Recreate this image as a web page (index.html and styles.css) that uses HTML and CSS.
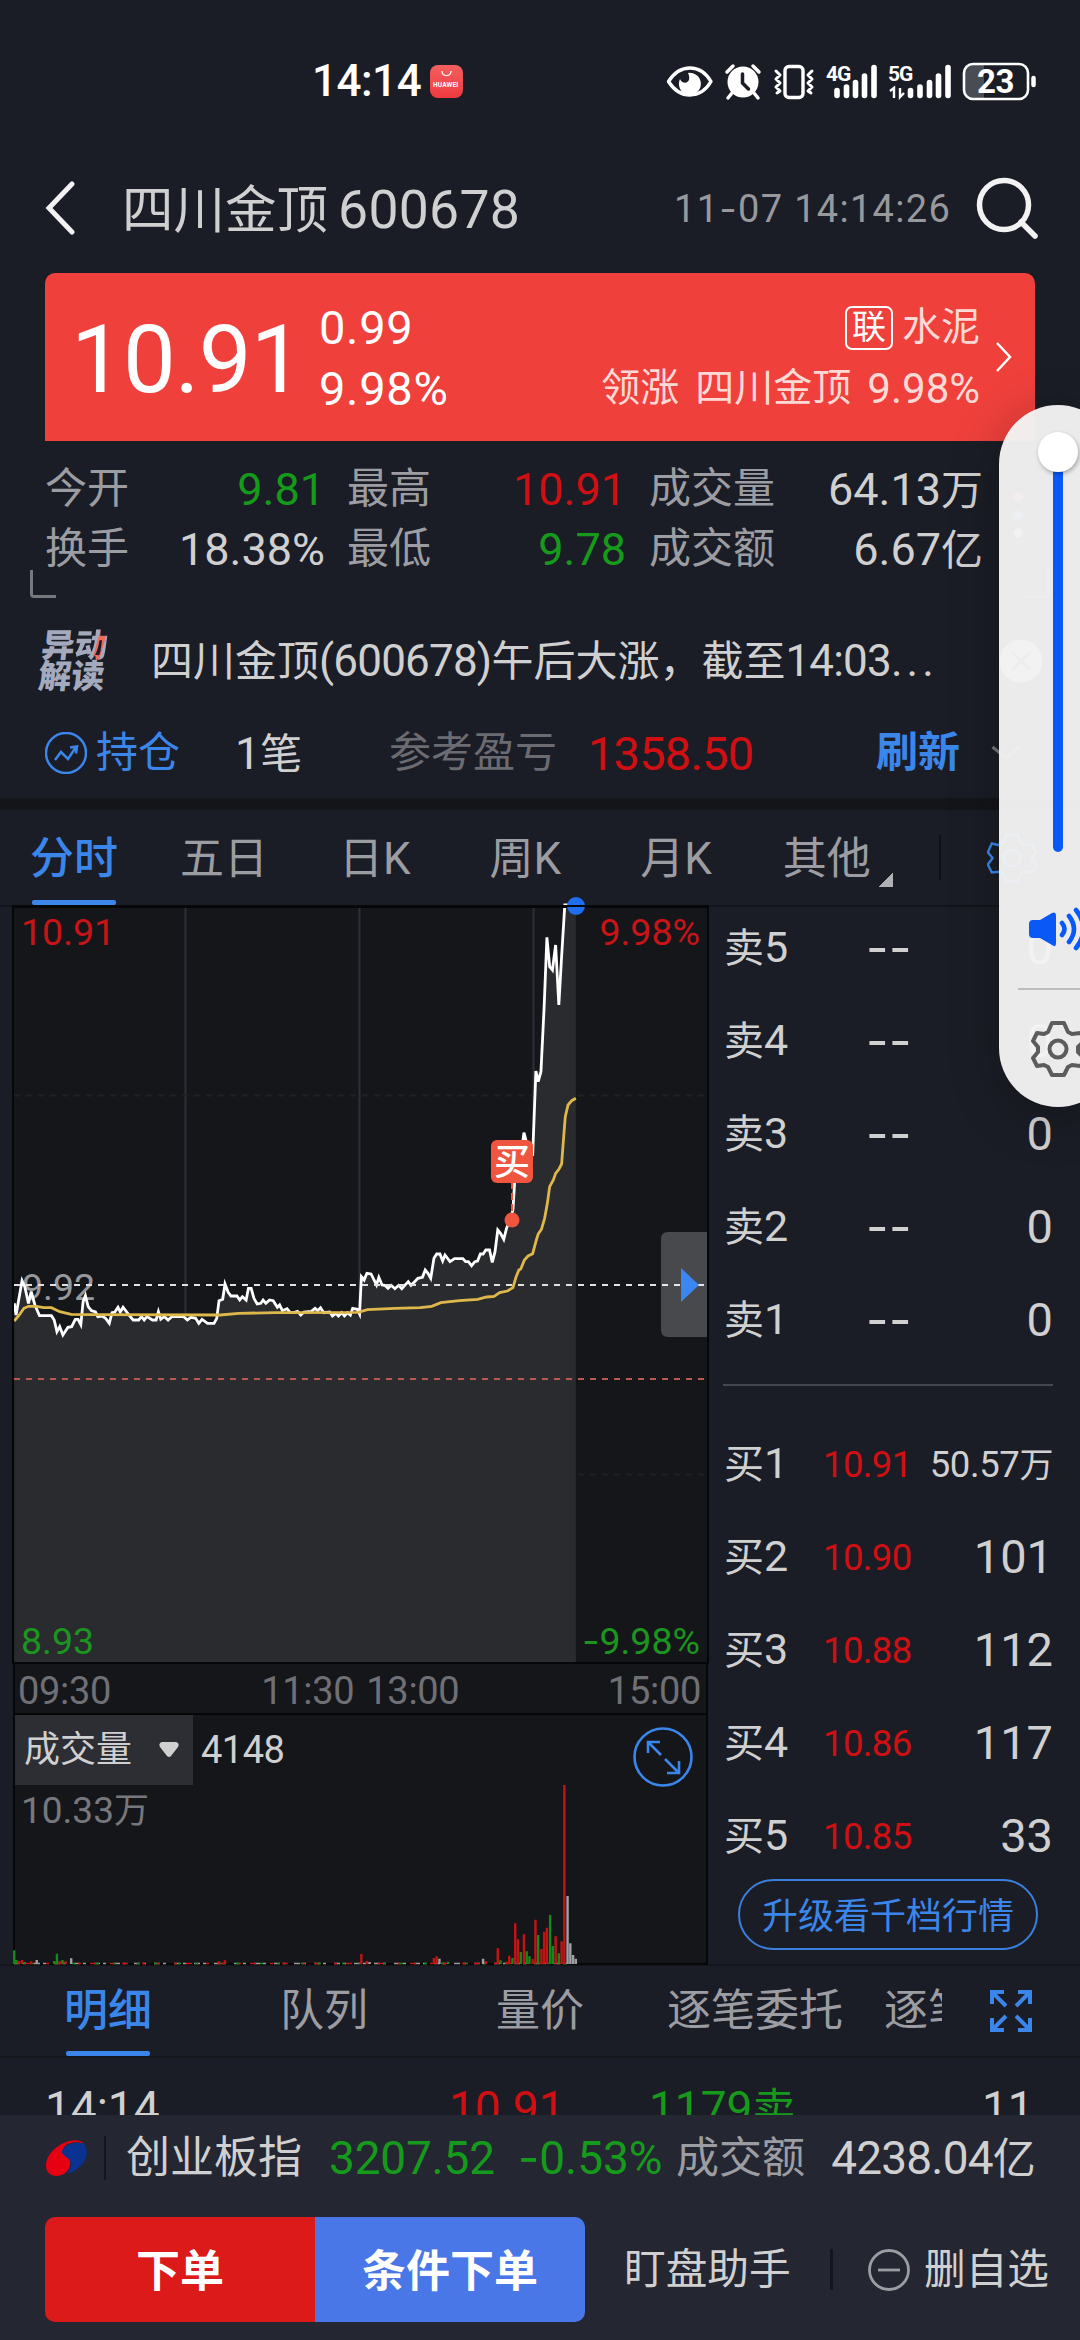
FILE: index.html
```html
<!DOCTYPE html>
<html lang="zh-CN">

<head>
    <meta charset="UTF-8" />
    <meta name="viewport" content="width=device-width, initial-scale=1.0" />
    <link rel="stylesheet" href="styles.css">
    <title>四川金顶 600678</title>
</head>

<body>
    <header class="status-bar">
        <span class="clock">14:14</span>
        <span class="app-badge"><svg width="33" height="33" viewBox="0 0 33 33"><path d="M12 6c0 6 9 6 9 0" fill="none" stroke="#fff" stroke-width="1.2" /></svg><b>HUAWEI</b></span>
        <svg class="status-icons" width="380" height="44" viewBox="660 58 380 44">
            <g fill="none" stroke="#fff" stroke-width="3.4">
                <path d="M668.500 80.500Q677 67 690 67T711 80.500Q703 94 690 94T668.500 80.500Z" stroke-linejoin="round" />
                <rect x="785" y="65.500" width="18" height="31" rx="4" />
                <path d="M776 70l4 4-4 4 4 4-4 4 4 4-3 2M812 70l-4 4 4 4-4 4 4 4-4 4 3 2" stroke-width="3" stroke-linecap="round" stroke-linejoin="round" />
                <path d="M727 71l6-6M759 71l-6-6M732 92l-4 5M754 92l4 5" stroke-width="3.500" stroke-linecap="round" />
            </g>
            <path d="M688 72a11 11 0 1 1-8 6c2 6 13 5 8-6z" fill="#fff" />
            <circle cx="743" cy="81" r="15.500" fill="#fff" />
            <path d="M742.500 73v9l6 6" fill="none" stroke="#1b1d26" stroke-width="3.500" stroke-linecap="round" />
            <path d="M837 89.500v5M846.500 86v8.500M855.500 81.500v13M864.500 75v19.500M874 66.500v28M910.500 89.500v5M920 86v8.500M929.500 81.500v13M938.500 75v19.500M948 66.500v28" stroke="#fff" stroke-width="5.600" stroke-linecap="round" />
            <path d="M890 90l4-3v10M900 87v9l4-4" stroke="#fff" stroke-width="2.400" fill="none" />
            <path d="M973 64h11v34h-11q-8 0-8-8V72q0-8 8-8z" fill="#4a4c54" />
            <rect x="964" y="63" width="64" height="35" rx="9" fill="none" stroke="#fff" stroke-width="2.600" />
            <path d="M1033.500 77v7" stroke="#fff" stroke-width="4.500" stroke-linecap="round" />
            <text class="net" x="826" y="80">4G</text>
            <text class="net" x="888" y="80">5G</text>
            <text class="battery" x="977" y="92">23</text>
        </svg>
    </header>

    <div class="title-bar">
        <svg class="back" width="30" height="54" viewBox="0 0 30 54"><path d="M27 3L4 27l23 24" /></svg>
        <h1>四川金顶 <span>600678</span></h1>
        <time>11<i class="minus">-</i>07 14:14:26</time>
        <svg class="search" width="64" height="64" viewBox="0 0 64 64"><circle cx="29" cy="29" r="24.500" /><path d="M46 46l14 14" /></svg>
    </div>

    <section class="quote">
        <div class="price">10.91</div>
        <div class="change"><span>0.99</span><span>9.98%</span></div>
        <div class="sector">
            <div><i>联</i>水泥</div>
            <div class="leader">领涨 <span>四川金顶</span> <span class="num">9.98%</span></div>
        </div>
        <svg width="18" height="32" viewBox="0 0 18 32"><path d="M2 2l13 14L2 30" /></svg>
    </section>

    <section class="stats">
        <span>今开</span><b class="down">9.81</b><span>最高</span><b class="up">10.91</b><span>成交量</span><b>64.13<em>万</em></b>
        <span>换手</span><b>18.38%</b><span>最低</span><b class="down">9.78</b><span>成交额</span><b>6.67<em>亿</em></b>
        <svg class="dots" width="10" height="50" viewBox="0 0 10 50"><circle cx="5" cy="6" r="4.500" fill="#ef7a5a" /><circle cx="5" cy="24" r="4.500" fill="#3b86ea" /><circle cx="5" cy="42" r="4.500" fill="#d0d0d0" /></svg>
    </section>
    <div class="corners"><i></i><i></i></div>

    <div class="news">
        <div class="news-logo"><span>异<u>动</u></span><span>解读</span></div>
        <p>四川金顶<span class="num">(600678)</span>午后大涨，截至<span class="num">14:03<s>...</s></span></p>
        <svg width="44" height="44" viewBox="0 0 44 44"><circle cx="22" cy="22" r="21.500" fill="#d0d0d0" /><path d="M13 13l18 18M31 13L13 31" stroke="#555" stroke-width="3" /></svg>
    </div>

    <div class="position">
        <svg class="trend" width="42" height="42" viewBox="0 0 42 42"><circle cx="21" cy="21" r="20" /><path d="M10 28l6-8 7 7 8-12M25 15.500l7-1-1 7" /></svg>
        <span class="hold">持仓</span>
        <span class="count"><span class="num">1</span>笔</span>
        <span class="label">参考盈亏</span>
        <b class="profit">1358.50</b>
        <span class="refresh">刷新</span>
        <svg class="more" width="30" height="16" viewBox="0 0 30 16"><path d="M1.500 2L15 13 28.500 2" /></svg>
    </div>

    <nav class="period">
        <span class="active">分时</span>
        <span>五日</span>
        <span>日K</span>
        <span>周K</span>
        <span>月K</span>
        <span class="other">其他</span>
        <svg class="gear" width="50" height="50" viewBox="-31 -31 62 62"><use href="#gear" /><circle r="10" /></svg>
    </nav>

    <main class="market">
        <div class="charts">
            <svg class="trend-chart" width="695" height="757" viewBox="13 906 695 757">
                <path class="grid" d="M185.500 908V1662M359.500 908V1662M533.500 908V1662" />
                <path class="grid faint" d="M14 1095.500H704M14 1474.500H704" />
                <g transform="translate(0 890) scale(.4592 .33333)">
                    <path class="area" d="M31 2316L31 1240 35 1275 48 1172 54 1190 62 1240 68 1205 76 1245 86 1277 112 1277 118 1290 124 1325 130 1310 137 1335 148 1312 156 1310 164 1288 170 1288 176 1304 181 1235 186 1217 192 1250 199 1262 208 1266 238 1300 244 1268 257 1252 276 1266 290 1290 340 1290 400 1280 433 1300 466 1300 477 1232 490 1182 503 1218 536 1230 541 1195 547 1195 560 1242 595 1232 615 1262 655 1275 698 1253 737 1278 783 1272 787 1160 799 1150 820 1185 852 1186 875 1196 903 1175 926 1140 938 1165 945 1105 951 1092 980 1115 1008 1106 1027 1127 1046 1092 1066 1080 1072 1117 1084 1020 1097 1048 1112 985 1121 870 1141 728 1153 800 1160 795 1167 543 1178 545 1185 350 1191 142 1203 240 1210 165 1217 345 1230 50 1254 50V2316Z" />
                </g>
                <text class="mid" x="22" y="1300">9.92</text>
                <g transform="translate(0 890) scale(.4592 .33333)">
                    <path class="line" d="M31 1240L35 1275 48 1172 54 1190 62 1240 68 1205 76 1245 86 1277 112 1277 118 1290 124 1325 130 1310 137 1335 148 1312 156 1310 164 1288 170 1288 176 1304 181 1235 186 1217 192 1250 199 1262 208 1266 213 1280 222 1278 230 1285 238 1300 244 1268 250 1266 257 1252 262 1266 268 1252 276 1266 282 1277 290 1290 302 1290 308 1280 314 1290 320 1280 332 1290 340 1290 345 1265 350 1288 358 1280 366 1290 374 1280 400 1280 408 1290 416 1282 426 1285 433 1300 440 1288 452 1300 466 1300 472 1285 477 1232 485 1228 490 1182 497 1207 503 1218 516 1218 522 1230 528 1220 536 1230 541 1195 547 1195 553 1225 560 1242 568 1240 573 1230 579 1240 587 1230 595 1232 604 1252 609 1245 615 1262 625 1256 632 1268 640 1268 648 1264 655 1275 662 1266 678 1264 686 1255 692 1262 698 1253 705 1268 718 1266 724 1278 731 1270 737 1278 744 1268 750 1278 757 1268 763 1275 768 1255 778 1258 783 1272 787 1160 793 1170 799 1150 808 1152 820 1185 825 1162 832 1185 838 1186 845 1195 852 1186 860 1196 868 1186 875 1196 889 1175 895 1186 903 1175 910 1165 920 1162 926 1140 932 1150 938 1165 945 1105 951 1092 958 1092 964 1113 969 1095 980 1115 990 1106 1008 1106 1014 1115 1020 1115 1027 1127 1034 1115 1040 1113 1046 1092 1052 1092 1058 1080 1066 1080 1072 1117 1078 1085 1084 1020 1090 1030 1097 1048 1103 1015 1112 985 1117 960 1121 870 1128 820 1135 790 1141 728 1147 760 1153 800 1160 795 1167 543 1172 575 1178 545 1185 350 1191 142 1197 230 1203 240 1210 165 1217 345 1223 200 1230 45 1253 45" />
                    <path class="line average" d="M31 1293L42 1275 52 1255 62 1249 80 1249 95 1253 112 1253 130 1265 155 1273 200 1274 480 1275 520 1270 600 1268 780 1267 800 1259 860 1255 915 1253 940 1249 960 1238 1000 1232 1040 1228 1060 1221 1076 1219 1088 1208 1105 1203 1117 1193 1124 1160 1130 1140 1134 1137 1142 1110 1150 1098 1160 1091 1168 1050 1172 1032 1179 1018 1186 985 1192 940 1197 890 1205 870 1210 850 1217 838 1223 822 1227 750 1231 680 1237 645 1245 632 1254 625" />
                </g>
                <path class="frame" d="M14 907H708" />
                <path class="dash" d="M14 1285H704" />
                <path class="dash red" d="M14 1379H704" />
                <path class="buy-line" d="M512 1182V1212" />
                <rect x="491" y="1140" width="42" height="43" rx="6" fill="#f0563f" />
                <text class="buy" x="494" y="1175">买</text>
                <circle cx="512" cy="1220" r="7.500" fill="#f0563f" />
                <circle cx="576" cy="906" r="9" fill="#1f6ef0" />
                <path d="M708 1232h-40q-7 0-7 7v91q0 7 7 7h40z" fill="#fff" opacity=".22" />
                <path d="M681 1268v34l18-17z" fill="#3b86f0" />
                <text class="up" x="21" y="945">10.91</text>
                <text class="up end" x="700" y="945">9.98%</text>
                <text class="down" x="21" y="1654">8.93</text>
                <text class="down end" x="700" y="1654"><tspan class="minus">-</tspan>9.98%</text>
            </svg>
            <div class="time-axis"><span>09:30</span><span>11:30</span><span>13:00</span><span>15:00</span></div>
            <div class="volume">
                <div class="volume-head">
                    <span class="indicator">成交量<svg width="20" height="16" viewBox="0 0 20 16"><path d="M3 0h14q4 1 2 5l-7 9q-2 2-4 0L1 5q-2-4 2-5z" /></svg></span>
                    <span class="volume-value">4148</span>
                    <svg class="expand" width="60" height="60" viewBox="0 0 60 60"><circle cx="30" cy="30" r="28.500" /><path d="M28 28L15 15M15 26V15h12M32 32l14 14M34 46h12V34" /></svg>
                </div>
                <div class="volume-max">10.33<em>万</em></div>
                <svg class="bars" width="695" height="180" viewBox="13 1784 695 180">
                    <path d="M14 1962.500H567" stroke="#9a9a9a" stroke-width="1.500" stroke-dasharray="6 3 3 8" />
                    <path d="M14 1962.500H567" stroke="#c21414" stroke-width="1.500" stroke-dasharray="3 9 6 14" />
                    <path d="M14 1962.500H567" stroke="#158a1a" stroke-width="1.500" stroke-dasharray="3 14 3 21" />
                    <g transform="translate(0 1620) scale(.4592 .33333)">
                        <path class="bar red" d="M42 1029V1020M48 1029V1017M68 1029V1021M130 1029V1020M143 1029V1021M477 1029V1020M490 1029V1018M787 1029V999M799 1029V1020M945 1029V1011M951 1029V1006M1058 1029V1020M1084 1029V982M1103 1029V1022M1109 1029V1004M1122 1029V907M1128 1029V955M1141 1029V940M1160 1029V1014M1166 1029V896M1179 1029V984M1185 1029V932M1191 1029V920M1210 1029V946M1223 1029V961M1229 1029V492" />
                        <path class="bar green" d="M31 1029V988M36 1029V1017M54 1029V1023M118 1029V1020M124 1029V998M136 1029V1017M976 1029V1022M1090 1029V1018M1116 1029V1011M1134 1029V993M1147 1029V991M1153 1029V1006M1172 1029V942M1198 1029V882M1204 1029V975M1217 1029V997" />
                        <path class="bar gray" d="M80 1029V1017M155 1029V1012M805 1029V1023M957 1029V1013M1052 1029V1013M1236 1029V825M1242 1029V967M1248 1029V1002M1254 1029V1013" />
                    </g>
                </svg>
            </div>
        </div>

        <div class="book">
            <ul class="asks">
                <li><span>卖<i>5</i></span><b>--</b><em>0</em></li>
                <li><span>卖<i>4</i></span><b>--</b><em>0</em></li>
                <li><span>卖<i>3</i></span><b>--</b><em>0</em></li>
                <li><span>卖<i>2</i></span><b>--</b><em>0</em></li>
                <li><span>卖<i>1</i></span><b>--</b><em>0</em></li>
            </ul>
            <ul class="bids">
                <li><span>买<i>1</i></span><b>10.91</b><em class="small">50.57<i>万</i></em></li>
                <li><span>买<i>2</i></span><b>10.90</b><em>101</em></li>
                <li><span>买<i>3</i></span><b>10.88</b><em>112</em></li>
                <li><span>买<i>4</i></span><b>10.86</b><em>117</em></li>
                <li><span>买<i>5</i></span><b>10.85</b><em>33</em></li>
            </ul>
            <button class="upgrade">升级看千档行情</button>
        </div>
    </main>

    <nav class="detail-tabs">
        <div class="tab-list">
            <span class="active">明细</span>
            <span>队列</span>
            <span>量价</span>
            <span>逐笔委托</span>
            <span>逐笔</span>
        </div>
        <svg width="42" height="42" viewBox="0 0 42 42"><path d="M16 16L3 3M2 14V2h12M26 16L39 3M28 2h12v12M16 26L3 39M2 28v12h12M26 26l13 13M28 40h12V28" /></svg>
    </nav>

    <div class="trade"><span>14:14</span><b class="up">10.91</b><b class="down">1179<em>卖</em></b><span>11</span></div>

    <footer>
        <div class="index-row">
            <svg width="42" height="42" viewBox="0 0 42 42"><path d="M39 7C35 1 22 2 12 10-2 20-3 38 11 39c8 0 15-6 14-15-1-5-9-6-7-12C20 6 31 3 39 7z" fill="#e60012" /><path d="M39 7C31 4 20 7 17 14c-1 5 8 6 9 12 0 5-2 8-4 11C37 32 47 18 39 7z" fill="#0a3290" /></svg>
            <span class="index-name">创业板指</span>
            <span class="down index-value">3207.52</span>
            <span class="down index-pct"><i class="minus">-</i>0.53%</span>
            <span class="turnover">成交额</span>
            <span class="amount">4238.04<em>亿</em></span>
        </div>
        <div class="actions">
            <button class="order">下单</button>
            <button class="order condition">条件下单</button>
            <span class="watch">盯盘助手</span>
            <svg width="42" height="42" viewBox="0 0 42 42"><circle cx="21" cy="21" r="19.500" /><path d="M10 21h22" /></svg>
            <span>删自选</span>
        </div>
    </footer>

    <aside class="volume-slider">
        <svg width="81" height="702" viewBox="999 405 81 702">
            <defs>
                <path id="gear" d="M-7-29H7L10-20 16-16 25-18 30-7 24 0 30 8 25 18 16 17 10 20 7 29H-7L-10 20-16 17-25 18-30 8-24 0-30-7-25-18-16-16-10-20Z" />
            </defs>
            <path d="M1058 450v397" stroke="#0a59f7" stroke-width="10" stroke-linecap="round" />
            <circle class="knob" cx="1058" cy="452" r="20" fill="#fff" />
            <path d="M1033 920h7l12-7q4-2 4 3v27q0 5-4 2l-12-7h-7q-4 0-4-4v-10q0-4 4-4z" fill="#0a59f7" />
            <path d="M1062 923q5 6 0 12M1069 916q10 13 0 26M1076 910q15 19 0 38" fill="none" stroke="#0a59f7" stroke-width="4.600" stroke-linecap="round" />
            <path d="M1018 989h62" stroke="#bdbdbd" stroke-width="2" />
            <g fill="none" stroke="#5c5c5c" stroke-width="4" stroke-linejoin="round" transform="translate(1058 1049)">
                <path d="M-6-26H6L10-17 14-15 23-16 26-8 20-2V3L26 9 23 17 14 16 10 18 6 26H-6L-10 18-14 16-21 17-25 9-20 3V-2L-25-8-21-16-14-15-10-17Z" />
                <circle r="8.500" />
            </g>
        </svg>
    </aside>
</body>

</html>
```
FILE: styles.css
```css
* {
    margin: 0;
    padding: 0;
    box-sizing: border-box;
}

body {
    position: relative;
    width: 1080px;
    height: 2340px;
    overflow: hidden;
    background-color: #1b1d26;
    color: #d0d0d0;
    font-family: Roboto, 'Noto Sans CJK SC', sans-serif;
    font-size: 42px;
    line-height: 1;
    white-space: nowrap;
}

i, em {
    font-style: normal;
}

b {
    font-weight: normal;
}

ul {
    list-style: none;
}

svg {
    display: block;
    flex: none;
}

button {
    border: 0;
    background: none;
    font-family: inherit;
}

.num {
    font-size: 45px;
}

.minus {
    font-family: Inter, sans-serif;
    line-height: 0;
}

.up {
    color: #d00f12;
    fill: #c81416;
}

.down {
    color: #169a1b;
    fill: #1c9420;
}

/* status bar */
.status-bar {
    display: flex;
    align-items: center;
    height: 162px;
    padding-left: 312px;
}

.clock {
    width: 118px;
    color: #fff;
    font-size: 44px;
    font-weight: 500;
    letter-spacing: -0.5px;
}

.app-badge {
    position: relative;
    width: 33px;
    height: 33px;
    border-radius: 8px;
    background: linear-gradient(#f4605f, #ee3a40);
    color: #fff;
}

.app-badge b {
    position: absolute;
    left: 3px;
    top: 17px;
    font-size: 6.5px;
    font-weight: 700;
    letter-spacing: 0.2px;
}

.status-icons {
    margin-left: 197px;
}

.status-icons text {
    fill: #fff;
    font-weight: 700;
}

.net {
    font-size: 21px;
    letter-spacing: -1px;
}

.status-icons .battery {
    font-size: 33px;
    letter-spacing: -0.5px;
}

/* title */
.title-bar {
    display: flex;
    align-items: center;
    height: 111px;
    padding-left: 45px;
    padding-bottom: 20px;
}

.title-bar svg {
    fill: none;
    stroke: #f2f2f2;
    stroke-width: 5;
    stroke-linecap: round;
}

.title-bar h1 {
    display: flex;
    align-items: baseline;
    gap: 10px;
    width: 552px;
    margin-left: 47px;
    padding-top: 4px;
    font-size: 51.5px;
    font-weight: 400;
}

.title-bar h1 span {
    font-size: 53.5px;
    letter-spacing: 0.3px;
}

.title-bar time {
    width: 301px;
    padding-top: 3px;
    color: #98999d;
    font-size: 38px;
    letter-spacing: 1.3px;
}

.title-bar .search {
    stroke-width: 5.5;
}

/* red quote card */
.quote {
    display: flex;
    align-items: center;
    height: 168px;
    margin: 0 45px;
    padding-left: 26px;
    border-radius: 10px 10px 0 0;
    background-color: #ef403c;
    color: #fff;
}

.price {
    width: 248px;
    padding-top: 6px;
    font-size: 94px;
    letter-spacing: -0.9px;
}

.change {
    display: flex;
    flex-direction: column;
    gap: 14px;
    padding-top: 2px;
    font-size: 47px;
    letter-spacing: 0.7px;
}

.sector {
    display: flex;
    flex-direction: column;
    align-items: flex-end;
    gap: 17px;
    flex: 1;
    margin-right: 15px;
    padding-top: 2px;
    color: #ffd9d6;
    font-size: 39px;
}

.sector div {
    display: flex;
    align-items: center;
    gap: 9px;
    height: 44px;
}

.sector .leader {
    gap: 16px;
}

.sector .num {
    font-size: 42px;
}

.sector i {
    width: 48px;
    height: 44px;
    border: 2px solid #fff;
    border-radius: 7px;
    color: #fff;
    font-size: 34px;
    line-height: 38px;
    text-align: center;
}

.quote svg {
    margin-right: 22px;
    fill: none;
    stroke: #fff;
    stroke-width: 2.5;
}

/* key figures */
.stats {
    display: grid;
    grid-template-columns: 84px 196px 109px 192px 142px 215px;
    grid-template-rows: 60px 60px;
    align-items: center;
    position: relative;
    height: 129px;
    padding: 18px 0 0 45px;
}

.stats span {
    color: #9c9da2;
}

.stats b {
    font-size: 45px;
    text-align: right;
}

.stats span:nth-of-type(3n + 2) {
    padding-left: 22px;
}

.stats span:nth-of-type(3n) {
    padding-left: 23px;
}

.stats em {
    font-size: 42px;
}

.dots {
    position: absolute;
    left: 1013px;
    top: 50px;
}

.corners {
    display: flex;
    justify-content: space-between;
    height: 28px;
    margin: 0 30px;
}

.corners i {
    width: 26px;
    border: solid #77787d;
    border-width: 0 0 3px 3px;
    border-radius: 0 0 0 4px;
}

.corners i + i {
    border-width: 0 3px 3px 0;
    border-radius: 0 0 4px 0;
}

/* news line */
.news {
    display: flex;
    align-items: center;
    height: 118px;
    padding: 8px 0 0 40px;
}

.news-logo {
    display: flex;
    flex-direction: column;
    width: 111px;
    color: #a3aabd;
    font-size: 33px;
    font-weight: 900;
    line-height: 31px;
    transform: skewX(-6deg);
}

.news-logo u {
    background: linear-gradient(100deg, #a3aabd 62%, #ef6a5c 63%, #ef6a5c 80%, #a3aabd 81%);
    background-clip: text;
    -webkit-background-clip: text;
    color: transparent;
    text-decoration: none;
}

.news p {
    width: 848px;
}

.news .num {
    font-size: 44px;
    letter-spacing: -0.8px;
}

.news s {
    letter-spacing: 4px;
    text-decoration: none;
}

/* position line */
.position {
    display: flex;
    align-items: center;
    height: 74px;
    padding-left: 45px;
}

.trend {
    fill: none;
    stroke: #3b86ea;
    stroke-width: 2.5;
}

.hold {
    width: 139px;
    margin-left: 9px;
    color: #3b86ea;
}

.count {
    width: 154px;
}

.label {
    width: 199px;
    color: #6b6c71;
}

.profit {
    width: 288px;
    color: #d00f12;
    font-size: 47px;
    letter-spacing: -0.8px;
}

.refresh {
    width: 115px;
    color: #3b86ea;
    font-weight: 700;
}

.more {
    fill: none;
    stroke: #77787d;
    stroke-width: 3;
}

/* chart period tabs */
.period {
    display: flex;
    align-items: center;
    height: 109px;
    margin-top: 8px;
    padding-left: 30px;
    border-top: 12px solid #141519;
    border-bottom: 2px solid #14151a;
    color: #9c9da2;
    font-size: 44px;
}

.period span {
    display: flex;
    align-items: center;
    position: relative;
    height: 95px;
    margin-right: 62px;
    padding-top: 2px;
}

.period .active::after,
.detail-tabs .active::after {
    content: '';
    position: absolute;
    left: 2px;
    right: 2px;
    bottom: 0;
    height: 5px;
    border-radius: 2px;
    background-color: #3b86ea;
}

.period .active {
    color: #3b86ea;
    font-weight: 500;
}

.period span:nth-child(2) {
    margin-right: 71px;
}

.period span:nth-child(3),
.period span:nth-child(4) {
    margin-right: 79px;
}

.period span:nth-child(5) {
    margin-right: 71px;
}

.period .other {
    width: 158px;
    margin-right: 46px;
}

.other::before {
    content: '';
    position: absolute;
    left: 95px;
    bottom: 18px;
    width: 15px;
    height: 14px;
    background: linear-gradient(137deg, transparent 50%, #b0b1b5 50%);
}

.other::after {
    content: '';
    position: absolute;
    right: 0;
    top: 25px;
    width: 2px;
    height: 45px;
    background-color: #111217;
}

.gear {
    fill: none;
    stroke: #3b86ea;
    stroke-width: 3;
}

/* charts and order book */
.market {
    display: flex;
    height: 1059px;
    padding-left: 13px;
    border-bottom: 2px solid #15161c;
}

.charts {
    width: 695px;
    margin-top: -1px;
}

.trend-chart {
    overflow: visible;
    background-color: #15161a;
    outline: 2px solid #060709;
    outline-offset: -1px;
    font-size: 37.5px;
}

.grid {
    stroke: #2d2e38;
    stroke-width: 2;
}

.faint {
    stroke: #202126;
    stroke-dasharray: 6;
}

.area {
    fill: #2a2b2f;
}

.line {
    fill: none;
    stroke: #fff;
    stroke-width: 2.8;
    vector-effect: non-scaling-stroke;
}

.average {
    stroke: #dfb84c;
}

.frame {
    stroke: #060709;
    stroke-width: 2;
}

.dash {
    stroke: #e0e0e0;
    stroke-width: 2;
    stroke-dasharray: 6;
}

.dash.red {
    stroke: #bb5850;
}

.buy-line {
    stroke: #f0563f;
    stroke-width: 2;
    stroke-dasharray: 7 4;
}

.buy {
    fill: #fff;
    font-size: 36px;
    font-weight: 500;
}

.mid {
    fill: #97989c;
}

.end {
    text-anchor: end;
}

.time-axis {
    display: flex;
    height: 50px;
    padding: 9px 5px 0 3px;
    border: solid #060709;
    border-width: 0 2px;
    background-color: #15161a;
    color: #6f7075;
    font-size: 38px;
    letter-spacing: -0.3px;
}

.time-axis span:nth-child(2) {
    margin-left: 150px;
}

.time-axis span:nth-child(3) {
    margin-left: 12px;
}

.time-axis span:nth-child(4) {
    margin-left: auto;
}

.volume {
    height: 252px;
    border: 2px solid #060709;
    background-color: #15161a;
}

.volume-head {
    display: flex;
    align-items: center;
    height: 70px;
}

.indicator {
    display: flex;
    align-items: center;
    justify-content: space-between;
    width: 178px;
    height: 70px;
    padding: 0 14px 0 9px;
    background-color: #2d2e33;
    font-size: 36px;
}

.indicator svg {
    fill: #d0d0d0;
}

.volume-value {
    width: 432px;
    margin-left: 8px;
    font-size: 38px;
    letter-spacing: -0.5px;
}

.expand {
    margin-top: 13px;
    fill: none;
    stroke: #3b86ea;
    stroke-width: 2.6;
}

.volume-max {
    height: 0;
    padding: 7px 0 0 6px;
    color: #77787d;
    font-size: 37px;
}

.volume-max em {
    font-size: 35px;
}

.bars {
    margin: -7px 0 0 -2px;
}

.bar {
    stroke-width: 2.4;
    vector-effect: non-scaling-stroke;
}

.bar.red {
    stroke: #c21414;
}

.bar.green {
    stroke: #158a1a;
}

.bar.gray {
    stroke: #a0a0a4;
}

.book {
    flex: 1;
    min-width: 0;
    padding: 0 27px 0 15px;
}

.book li {
    display: grid;
    grid-template-columns: 94px 142px 1fr;
    align-items: center;
    height: 93px;
    padding-left: 1px;
    font-size: 40px;
}

.book li i {
    font-size: 43px;
}

.book em {
    justify-self: end;
    font-size: 47px;
}

.asks {
    height: 484px;
    margin-top: -5px;
    border-bottom: 2px solid #45464f;
}

.asks li {
    padding-bottom: 3px;
}

.asks b {
    justify-self: center;
    font-family: Inter, sans-serif;
    font-size: 49px;
    letter-spacing: 0.5px;
}

.bids {
    height: 493px;
    padding-top: 31px;
}

.book .bids li {
    grid-template-columns: 99px 96px 1fr;
}

.bids b {
    padding-top: 4px;
    color: #d00f12;
    font-size: 36.5px;
    letter-spacing: -0.6px;
}

.bids .small {
    padding-top: 4px;
    font-size: 36.5px;
    letter-spacing: -0.4px;
}

.book .small i {
    font-size: 34px;
}

.upgrade {
    width: 300px;
    height: 71px;
    margin-left: 15px;
    padding-bottom: 3px;
    border: 2px solid #3b7fdc;
    border-radius: 36px;
    color: #3b86ea;
    font-size: 36px;
}

/* detail tabs */
.detail-tabs {
    display: flex;
    align-items: center;
    height: 92px;
    border-bottom: 2px solid #14151a;
    color: #9c9da2;
    font-size: 44px;
}

.tab-list {
    display: flex;
    align-items: center;
    width: 942px;
    height: 90px;
    padding-left: 64px;
    overflow: hidden;
}

.tab-list span {
    display: flex;
    align-items: center;
    position: relative;
    flex: none;
    height: 90px;
    margin-right: 128px;
}

.tab-list span:nth-child(3) {
    margin-right: 83px;
}

.tab-list span:nth-child(4) {
    margin-right: 41px;
}

.tab-list .active {
    color: #3b86ea;
    font-weight: 500;
}

.detail-tabs svg {
    margin-left: 48px;
    fill: none;
    stroke: #3b86ea;
    stroke-width: 4;
}

.trade {
    display: grid;
    grid-template-columns: 404px 200px 333px 1fr;
    height: 57px;
    padding: 27px 0 0 45px;
    overflow: hidden;
    font-size: 46px;
}

.trade em {
    font-size: 43px;
}

/* bottom bar */
footer {
    position: relative;
    height: 225px;
    background-color: #242632;
}

.index-row {
    display: flex;
    align-items: center;
    height: 84px;
    padding: 2px 0 0 45px;
    font-size: 46px;
}

.index-name {
    width: 202px;
    margin-left: 17px;
    padding-left: 20px;
    border-left: 2px solid #15161c;
    font-size: 44px;
}

.index-value {
    width: 189px;
    margin-left: 23px;
    letter-spacing: -0.2px;
}

.index-pct {
    width: 158px;
}

.turnover {
    color: #9c9da2;
    font-size: 43px;
}

.amount {
    margin-left: auto;
    margin-right: 45px;
    letter-spacing: -0.8px;
}

.amount em {
    font-size: 43px;
}

.actions {
    display: flex;
    align-items: center;
    height: 105px;
    margin-top: 18px;
    padding-left: 45px;
    font-size: 41.7px;
}

.order {
    width: 270px;
    height: 105px;
    padding-bottom: 3px;
    border-radius: 10px 0 0 10px;
    background-color: #dc1a19;
    color: #fff;
    font-size: 44px;
    font-weight: 700;
}

.condition {
    border-radius: 0 10px 10px 0;
    background-color: #4a77e8;
}

.watch {
    width: 209px;
    margin-left: 39px;
    margin-right: 35px;
    border-right: 3px solid #15161c;
}

.actions svg {
    margin-right: 14px;
    fill: none;
    stroke: #9c9da2;
    stroke-width: 2.8;
}

/* system volume panel */
.volume-slider {
    position: absolute;
    left: 999px;
    top: 405px;
    width: 118px;
    height: 702px;
    border-radius: 59px;
    background-color: rgba(243, 243, 243, 0.965);
    box-shadow: 0 10px 50px rgba(0, 0, 0, 0.25);
}

.knob {
    filter: drop-shadow(1px 2px 2px rgba(0, 0, 0, 0.3));
}
```
